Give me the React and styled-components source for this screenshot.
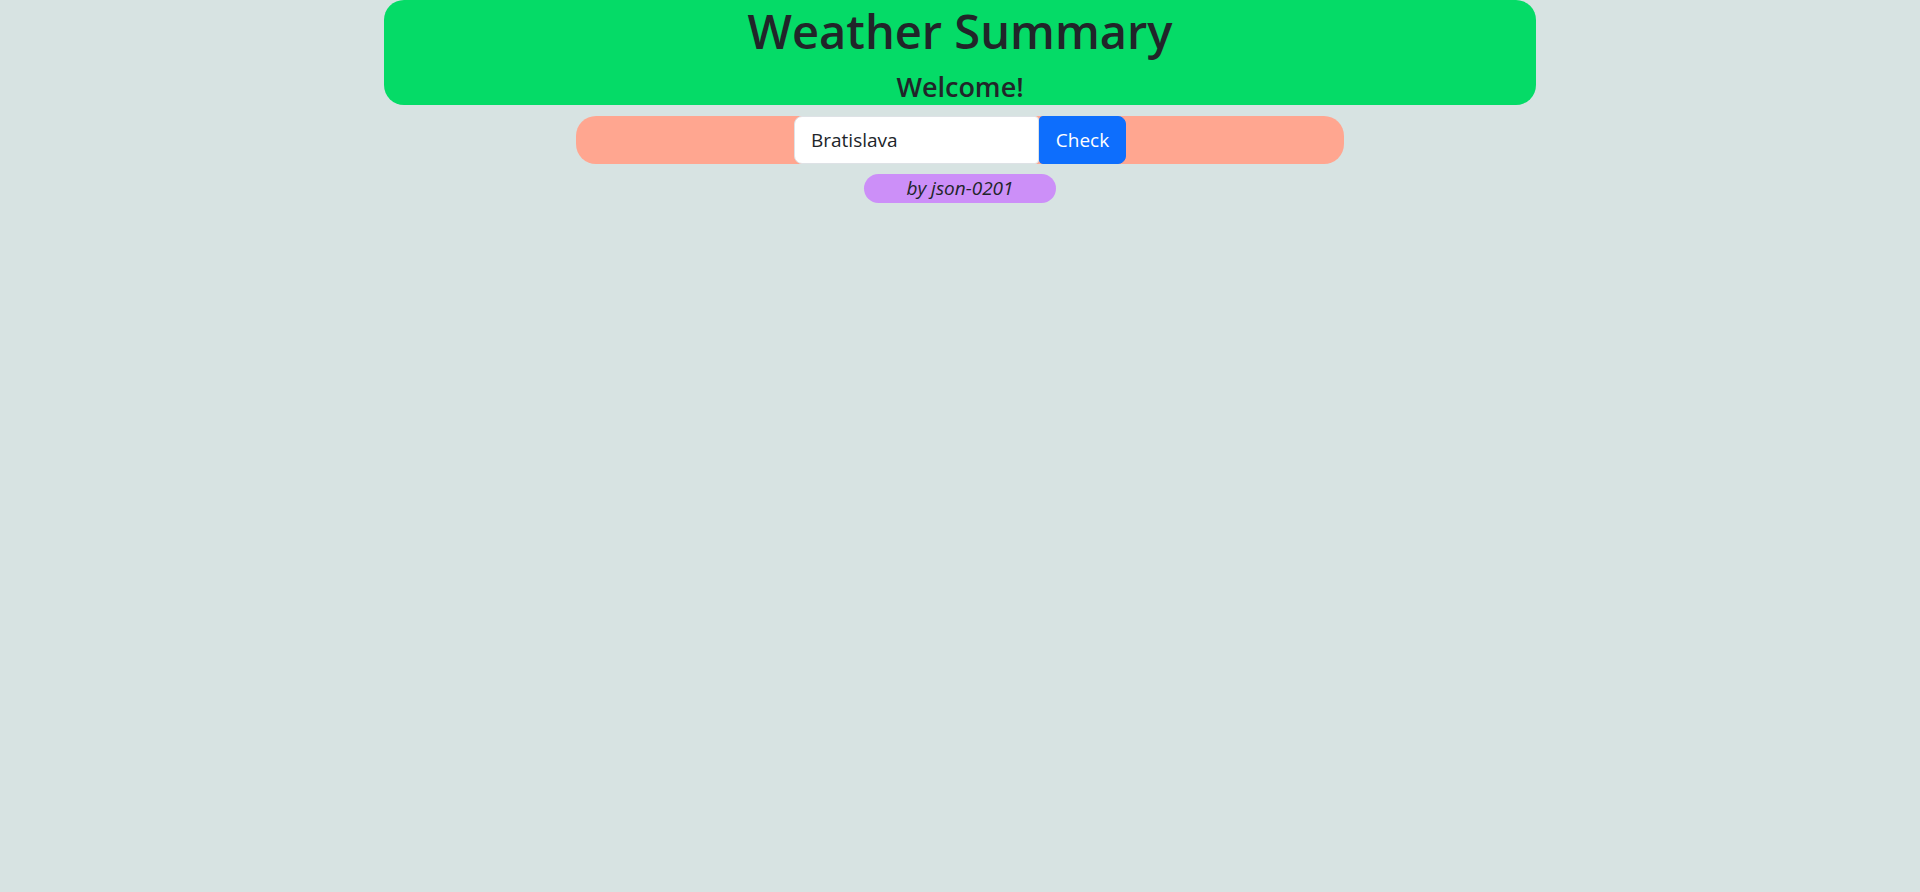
import React, { useState } from "react";
import styled, { createGlobalStyle } from "styled-components";

const GlobalStyle = createGlobalStyle`
  body {
    margin: 0;
    background: #d7e3e2;
    color: #212529;
    font-family: "Segoe UI", "Open Sans", "Noto Sans", sans-serif;
  }
  * { box-sizing: border-box; }
`;

const Page = styled.div`
  display: flex;
  flex-direction: column;
  align-items: center;
  min-height: 892px;
`;

const Header = styled.header`
  width: 60%;
  background: #05db67;
  border-radius: 20px;
  text-align: center;
`;

const Title = styled.h1`
  margin: 0 0 7px;
  font-size: 47px;
  font-weight: 600;
  line-height: 62px;
`;

const Subtitle = styled.h3`
  margin: 0;
  font-size: 27px;
  font-weight: 600;
  line-height: 36px;
`;

const SearchBar = styled.form`
  width: 40%;
  margin: 11px 0 0;
  background: #ffa690;
  border-radius: 20px;
  display: flex;
  justify-content: center;
`;

const CityInput = styled.input`
  width: 245px;
  height: 48px;
  padding: 0 16px;
  font: inherit;
  font-size: 19px;
  color: #212529;
  background: #fff;
  border: 1px solid #dee2e6;
  border-radius: 8px 4px 4px 8px;
  outline: none;
`;

const CheckButton = styled.button`
  width: 87px;
  height: 48px;
  padding: 0;
  font: inherit;
  font-size: 19px;
  color: #fff;
  background: #0d6efd;
  border: 1px solid #0d6efd;
  border-radius: 4px 8px 8px 4px;
  cursor: pointer;
`;

const Credit = styled.div`
  width: 10%;
  margin-top: 10px;
  background: #cc8ff8;
  border-radius: 15px;
  text-align: center;
  font-style: italic;
  font-weight: 400;
  font-size: 19px;
  line-height: 29px;
`;

export default function App() {
  const [city, setCity] = useState("Bratislava");

  return (
    <Page>
      <GlobalStyle />
      <Header>
        <Title>Weather Summary</Title>
        <Subtitle>Welcome!</Subtitle>
      </Header>
      <SearchBar onSubmit={(e) => e.preventDefault()}>
        <CityInput value={city} onChange={(e) => setCity(e.target.value)} />
        <CheckButton type="submit">Check</CheckButton>
      </SearchBar>
      <Credit>by json-0201</Credit>
    </Page>
  );
}
